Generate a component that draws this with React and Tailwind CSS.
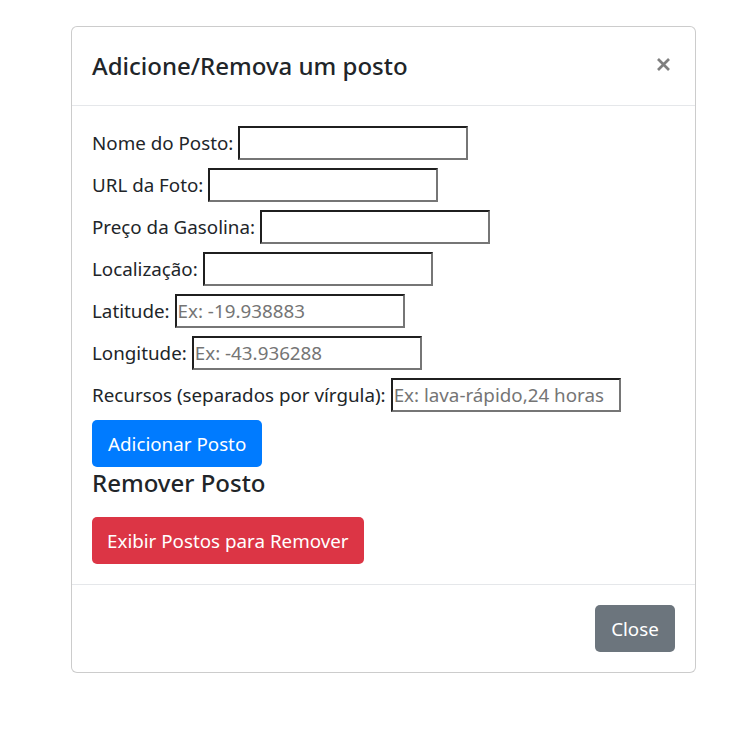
import React from "react";

const font = { fontFamily: '"Noto Sans", "Liberation Sans", sans-serif' };

function Field({ label, placeholder }) {
  return (
    <div className="flex items-center h-[34px]">
      <span className="whitespace-nowrap mr-[5px]">{label}</span>
      <input
        type="text"
        placeholder={placeholder}
        className="w-[230px] h-[34px] border-2 border-t-[#1f1f1f] border-l-[#1f1f1f] border-b-[#767676] border-r-[#767676] px-[1px] text-[18.8px] text-[#212529] placeholder:text-[#757575] outline-none bg-white"
        style={font}
      />
    </div>
  );
}

export default function App() {
  return (
    <div className="min-h-[745px] bg-white pt-[26px] pl-[71px] text-[#212529]" style={font}>
      <div className="w-[625px] border border-[rgba(0,0,0,0.2)] rounded-[6px] bg-white">
        <div className="h-[79px] flex items-center justify-between px-[20px] border-b border-[#e5e7ea]">
          <h5 className="text-[24px] font-medium leading-[30px]">Adicione/Remova um posto</h5>
          <button className="w-[13px] h-[13px] mr-[5px] mt-[-4px]" aria-label="Close">
            <svg viewBox="0 0 13 13" width="13" height="13" className="block">
              <path d="M1 1 L12 12 M12 1 L1 12" stroke="#7f7f7f" strokeWidth="2.7" strokeLinecap="butt" />
            </svg>
          </button>
        </div>
        <div className="px-[20px] pt-[20px] pb-[20px] text-[18.8px]">
          <div className="flex flex-col gap-[8px]">
            <Field label="Nome do Posto:" />
            <Field label="URL da Foto:" />
            <Field label="Preço da Gasolina:" />
            <Field label="Localização:" />
            <Field label="Latitude:" placeholder="Ex: -19.938883" />
            <Field label="Longitude:" placeholder="Ex: -43.936288" />
            <Field label="Recursos (separados por vírgula):" placeholder="Ex: lava-rápido,24 horas" />
          </div>
          <button className="mt-[8px] h-[47px] px-[16px] rounded-[5px] bg-[#007bff] text-white text-[18.8px] leading-[30px]">
            Adicionar Posto
          </button>
          <h5 className="text-[24px] font-medium leading-[30px] mt-[1px] mb-[19px]">Remover Posto</h5>
          <button className="h-[47px] px-[15px] rounded-[5px] bg-[#dc3545] text-white text-[18.8px] leading-[30px]">
            Exibir Postos para Remover
          </button>
        </div>
        <div className="border-t border-[#e5e7ea] p-[15px] flex justify-end">
          <button className="m-[5px] h-[47px] w-[80px] rounded-[5px] bg-[#6c757d] text-white text-[18.8px] leading-[30px]">
            Close
          </button>
        </div>
      </div>
    </div>
  );
}
